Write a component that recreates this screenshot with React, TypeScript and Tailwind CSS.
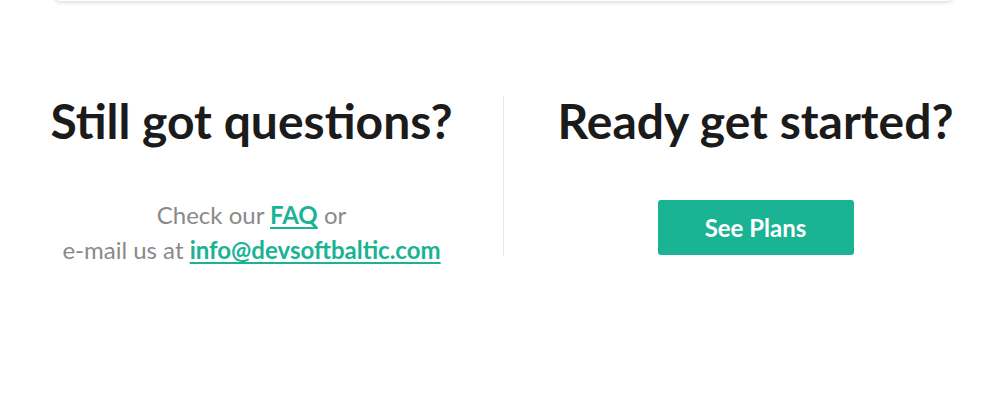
export default function App() {
  return (
    <div className="w-[1007px] h-[400px] bg-white overflow-hidden" style={{ fontFamily: "Lato, 'Noto Sans', sans-serif" }}>
      <div className="mx-[54px] h-[20px] -mt-[19px] rounded-b-[6px] bg-white shadow-[0_1px_4px_rgba(0,0,0,0.18)]" />
      <div className="flex mt-[95px]">
        <div className="w-[503px] flex flex-col items-center">
          <h2 className="text-[48px] leading-[56px] font-bold text-[#1b1b1b] -mt-[3px]">Still got questions?</h2>
          <p className="mt-[48px] text-[24px] leading-[35px] text-[#8a8a8a] text-center">
            Check our <a href="#" className="text-[#1ab394] font-bold underline underline-offset-[3px] decoration-[2px]">FAQ</a> or
            <br />
            e-mail us at <a href="#" className="text-[#1ab394] font-bold underline underline-offset-[3px] decoration-[2px]">info@devsoftbaltic.com</a>
          </p>
        </div>
        <div className="w-px h-[160px] bg-[#e6e6e6]" />
        <div className="flex-1 flex flex-col items-center">
          <h2 className="text-[48px] leading-[56px] font-bold text-[#1b1b1b] -mt-[3px]">Ready get started?</h2>
          <button className="mt-[51px] w-[196px] h-[55px] rounded-[3px] bg-[#1ab394] text-white text-[24px] font-bold">See Plans</button>
        </div>
      </div>
    </div>
  );
}
